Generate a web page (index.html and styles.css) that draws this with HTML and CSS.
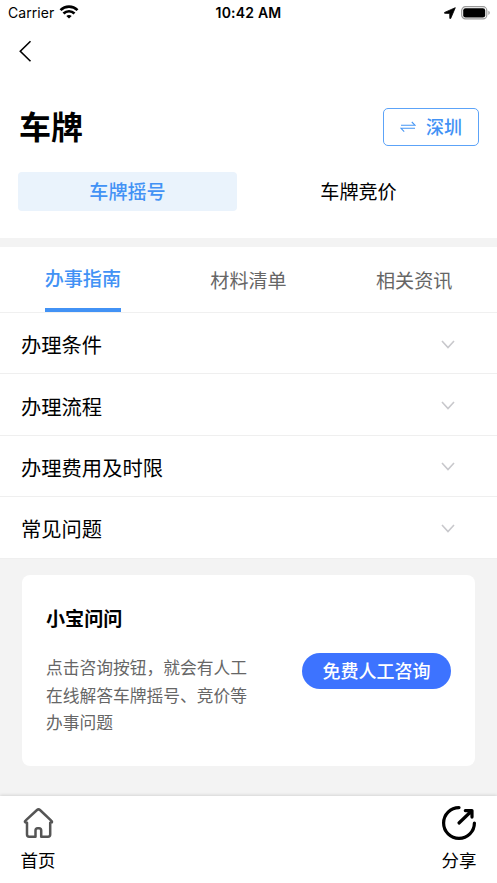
FILE: index.html
```html
<!DOCTYPE html>
<html lang="zh-CN">
<head>
<meta charset="utf-8">
<title>车牌</title>
<link rel="stylesheet" href="styles.css">
</head>
<body>
<div class="app">
  <div class="status">
    <div class="status-left">
      <span>Carrier</span>
      <svg class="wifi" width="20" height="14" viewBox="0 0 20 14" fill="none" stroke="#000" stroke-width="2.7"><path d="M1.500 5.100C6.200.5 13.800.5 18.500 5.100"/><path d="M4.500 8.500c3.100-3 7.900-3 11 0"/><path d="M7.300 10.900c1.600-1.200 3.800-1.200 5.400 0L10 13.500z" fill="#000" stroke="none"/></svg>
    </div>
    <div class="status-time">10:42 AM</div>
    <div class="status-right">
      <svg width="12" height="12" viewBox="0 0 12 12"><path d="M11.300.7.6 5.400c-.5.3-.3.900.2.900l4.900.1.1 4.900c0 .5.600.7.900.2z" stroke="#000" stroke-width=".8"/></svg>
      <svg width="30" height="14" viewBox="0 0 30 14"><rect x=".7" y=".7" width="25.1" height="12.2" rx="3.8" fill="none" stroke="#999" stroke-width="1.2"/><rect x="2.2" y="2.2" width="22" height="9.3" rx="2.3"/><path d="M27.400 4.700q1.400.5 1.400 2.100t-1.400 2.100z" fill="#999"/></svg>
    </div>
  </div>
  <div class="nav">
    <svg width="14" height="22" viewBox="0 0 14 22" fill="none" stroke="#000" stroke-width="1.6"><path d="M12.500 1.300 2.300 11.300 12.500 21.300"/></svg>
  </div>
  <header class="header">
    <h1>车牌</h1>
    <div class="city">
      <svg width="16" height="12" viewBox="0 0 16 12" fill="none" stroke="#4696f5" stroke-width="1.1"><path d="M1 4.200h14L11.800 1M15 7.300H1l3.200 3.400"/></svg>
      <span>深圳</span>
    </div>
  </header>
  <div class="segments">
    <div class="segment active">车牌摇号</div>
    <div class="segment">车牌竞价</div>
  </div>
  <nav class="tabs">
    <div class="tab active"><span>办事指南</span></div>
    <div class="tab"><span>材料清单</span></div>
    <div class="tab"><span>相关资讯</span></div>
  </nav>
  <div class="list">
    <div class="row"><span>办理条件</span><svg class="chevron" width="14" height="9" viewBox="0 0 14 9"><path d="M1 1l6 6.500L13 1"/></svg></div>
    <div class="row"><span>办理流程</span><svg class="chevron" width="14" height="9" viewBox="0 0 14 9"><path d="M1 1l6 6.500L13 1"/></svg></div>
    <div class="row"><span>办理费用及时限</span><svg class="chevron" width="14" height="9" viewBox="0 0 14 9"><path d="M1 1l6 6.500L13 1"/></svg></div>
    <div class="row"><span>常见问题</span><svg class="chevron" width="14" height="9" viewBox="0 0 14 9"><path d="M1 1l6 6.500L13 1"/></svg></div>
  </div>
  <main class="content">
    <section class="card">
      <h2>小宝问问</h2>
      <div class="card-body">
        <p>点击咨询按钮，就会有人工<br>在线解答车牌摇号、竞价等<br>办事问题</p>
        <div class="consult">免费人工咨询</div>
      </div>
    </section>
  </main>
  <footer class="footer">
    <div class="foot-item">
      <svg width="36" height="36" viewBox="0 0 36 36" fill="none" stroke="#555" stroke-width="2.5" stroke-linejoin="round" stroke-linecap="round"><path d="M7 17.800V29.500q0 2.200 2.200 2.200H15.500V25.500q0-2.300 2.200-2.300h1.300q2.200 0 2.200 2.300v6.200H28q2.200 0 2.200-2.200V17.800q1.800 0 1.800-1 0-.5-.8-1.200L20 5q-1.500-1.300-3 0L5.500 15.600q-.8.700-.6 1.300.3.900 2.100.9z"/></svg>
      <span>首页</span>
    </div>
    <div class="foot-item">
      <svg width="36" height="36" viewBox="0 0 36 36" fill="none" stroke="#000" stroke-width="3.200" stroke-linecap="round" stroke-linejoin="round"><path d="M18 2.600A15.400 15.400 0 1 0 33.400 18"/><path d="M18 18 30 6.500M24.300 5.600H31v6.500"/></svg>
      <span>分享</span>
    </div>
  </footer>
</div>
</body>
</html>
```

FILE: styles.css
```css
* { box-sizing: border-box; }
body {
  margin: 0;
  background: #fff;
  color: #000;
  font-family: "Noto Sans CJK SC", sans-serif;
}
h1, h2, p { margin: 0; }
svg { display: block; flex: none; }
.app { width: 497px; height: 883px; display: flex; flex-direction: column; overflow: hidden; }

.status {
  height: 26px;
  display: grid;
  grid-template-columns: 1fr auto 1fr;
  align-items: center;
  padding: 0 6px 0 8px;
  font-family: Inter, sans-serif;
  font-size: 14px;
  line-height: 26px;
}
.status-left { display: flex; align-items: center; gap: 5px; letter-spacing: 0.05px; }
.wifi { margin-top: -2px; }
.status-time { font-weight: 600; font-size: 14px; letter-spacing: 0.2px; margin-right: 2px; }
.status-right { display: flex; align-items: center; justify-content: flex-end; gap: 5px; }

.nav { height: 54px; padding: 14px 0 0 18px; }

.header { height: 92px; padding: 0 18px 0 19px; display: flex; align-items: center; justify-content: space-between; }
h1 { font-size: 32px; line-height: 40px; font-weight: 700; margin-top: -2px; }
.city {
  width: 96px;
  height: 38px;
  margin-top: 2px;
  border: 1px solid #5ca3f8;
  border-radius: 5px;
  display: flex;
  align-items: center;
  justify-content: center;
  gap: 10px;
  color: #4292f5;
  font-size: 18px;
  font-weight: 500;
  line-height: 34px;
}
.city span { margin-top: -2px; }

.segments {
  height: 66px;
  padding: 0 18px;
  display: grid;
  grid-template-columns: 219px 219px;
  gap: 12px;
}
.segment { height: 39px; border-radius: 4px; font-size: 19.1px; line-height: 38px; text-align: center; }
.segment.active { background: #eaf3fc; color: #4292f5; font-weight: 500; }

.tabs {
  height: 75px;
  border-top: 9px solid #f3f3f3;
  border-bottom: 1px solid #f0f0f0;
  display: grid;
  grid-template-columns: repeat(3, 1fr);
  font-size: 19.1px;
  line-height: 66px;
  color: #666;
}
.tab { display: flex; justify-content: center; }
.tab.active { color: #4292f5; font-weight: 500; }
.tab.active span { height: 65px; line-height: 62px; border-bottom: 4px solid #4292f5; }

.row {
  height: 61.4px;
  padding: 2px 42px 0 21px;
  border-bottom: 1px solid #efefef;
  display: flex;
  align-items: center;
  justify-content: space-between;
  font-size: 20.3px;
}
.chevron { fill: none; stroke: #c8c8cc; stroke-width: 1.6; }

.content { flex: 1; background: #f3f3f3; padding: 16px 22px 0; }
.card { height: 191px; background: #fff; border-radius: 8px; padding: 29px 24px 0; }
h2 { font-size: 19.1px; line-height: 28px; font-weight: 700; }
.card-body { display: flex; justify-content: space-between; margin-top: 21px; }
.card-body p { font-size: 16.75px; line-height: 27.5px; color: #666; white-space: nowrap; margin-top: 1.5px; }
.consult {
  width: 149px;
  height: 36px;
  border-radius: 18px;
  background: #3d73ff;
  color: #fff;
  font-size: 18px;
  font-weight: 500;
  line-height: 35px;
  text-align: center;
}

.footer {
  height: 87px;
  padding: 9px 20px 0;
  display: flex;
  justify-content: space-between;
  background: #fff;
  box-shadow: 0 -1px 3px rgba(0, 0, 0, 0.12);
  z-index: 1;
}
.foot-item { display: flex; flex-direction: column; align-items: center; font-size: 17.5px; line-height: 26px; gap: 6px; }
.foot-item span { line-height: 26px; }
```
